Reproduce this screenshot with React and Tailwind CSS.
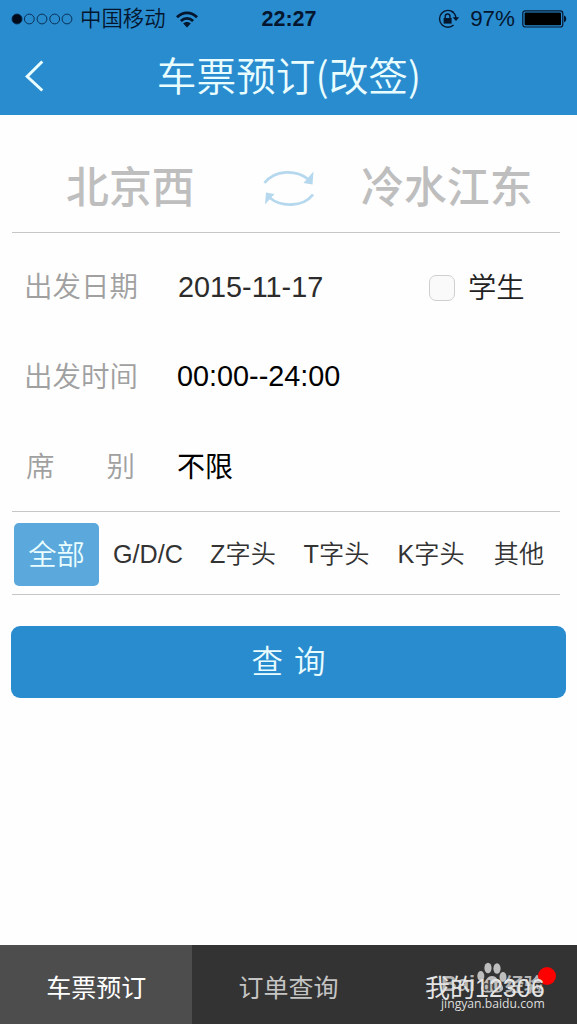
import React, { useState } from "react";

const trainTypes = [
  { label: "全部", width: "w-[85px]" },
  { label: "G/D/C", width: "w-[98px]" },
  { label: "Z字头", width: "w-[92px]" },
  { label: "T字头", width: "w-[95px]" },
  { label: "K字头", width: "w-[94px]" },
  { label: "其他", width: "w-[82px]" },
];

function StatusBar() {
  return (
    <div className="grid h-[38px] grid-cols-[1fr_auto_1fr] items-center pl-[11px] pr-[10px] text-[#04162e]">
      <div className="flex items-center">
        <svg width="62" height="12" viewBox="0 0 62 12" fill="none" stroke="#06284c" strokeWidth="0.9">
          <circle cx="6" cy="6" r="5" fill="#000a18" />
          <circle cx="18.3" cy="6" r="4.9" />
          <circle cx="31" cy="6" r="4.9" />
          <circle cx="43.7" cy="6" r="4.9" />
          <circle cx="56" cy="6" r="4.9" />
        </svg>
        <span className="ml-[7px] pt-[2px] text-[21.4px] font-[350] leading-none">中国移动</span>
        <svg className="ml-[10px]" width="22" height="17" viewBox="0 0 22 17" fill="none" stroke="#04162e" strokeWidth="2.8">
          <path d="M1 6.2C6.8.4 15.2.4 21 6.2" />
          <path d="M4.9 9.9c3.6-3.4 8.6-3.4 12.2 0" />
          <path d="M11 16.4l-3.8-3.8c2.2-2 5.4-2 7.6 0z" fill="#04162e" stroke="none" />
        </svg>
      </div>
      <span className="pt-[2px] text-[21.5px] font-bold leading-none">22:27</span>
      <div className="flex items-center justify-end">
        <svg width="22" height="20" viewBox="0 0 22 20" fill="none" stroke="#04162e" strokeWidth="1.4">
          <path d="M15.6 3.6A8.4 8.4 0 1 0 15.6 16" />
          <path d="M13.5 2.3A8.4 8.4 0 0 1 18 9" />
          <path d="M14.6 8.2h6.6L18 12z" fill="#04162e" stroke="none" />
          <path d="M5.6 9h8v5.6h-8z" fill="#04162e" stroke="none" />
          <path d="M7.2 9V7.4a2.4 2.4 0 0 1 4.8 0V9" />
        </svg>
        <span className="ml-[10px] text-[22.4px] leading-none">97%</span>
        <svg className="ml-[7px]" width="45" height="18" viewBox="0 0 45 18">
          <rect x="0.8" y="0.8" width="40" height="16.2" rx="2.5" fill="none" stroke="#04162e" strokeWidth="1.2" />
          <rect x="2.6" y="2.5" width="36.4" height="12.8" rx="1" fill="#000" />
          <path d="M42 5.6c3 .6 3 6 0 6.6z" fill="#04162e" />
        </svg>
      </div>
    </div>
  );
}

function Header() {
  return (
    <header className="h-[115px] bg-[#298ccf]">
      <StatusBar />
      <div className="grid h-[76px] grid-cols-[64px_1fr_64px] items-center">
        <button type="button" className="pl-[25px]">
          <svg width="20" height="32" viewBox="0 0 20 32" fill="none" stroke="#e9fdff" strokeWidth="3">
            <path d="M17.3 1.5L2.2 16.5l15.1 14" />
          </svg>
        </button>
        <h1 className="whitespace-nowrap pb-[5px] pl-px text-center font-['Noto_Sans_CJK_SC',sans-serif] text-[39.7px] font-[350] leading-none text-[#e9fdff]">
          车票预订(改签)
        </h1>
      </div>
    </header>
  );
}

function Stations() {
  return (
    <div className="flex h-[118px] items-center border-b border-[#c6c6c6] pt-[28px] text-[42.9px] font-medium leading-none text-[#bebebe]">
      <span className="w-[251px] pl-[54px] pt-[2px]">北京西</span>
      <svg width="52" height="38" viewBox="0 0 52 38" fill="none" stroke="#b5d8ee" strokeWidth="2.8">
        <path d="M1.5 14C12 .5 33 .5 45 10" />
        <path d="M50.5 2.5L49.5 15.5 40.5 14z" fill="#b5d8ee" stroke="none" />
        <path d="M50 25.5C40 38.5 18 38 7 29" />
        <path d="M2 35.5L3 23.5l8.5 1.5z" fill="#b5d8ee" stroke="none" />
      </svg>
      <span className="pl-[46px] pt-[2px]">冷水江东</span>
    </div>
  );
}

function Row({ label, children }) {
  return (
    <div className="flex h-[90px] items-center leading-none">
      <div className="w-[165px] pl-[12px] text-[28.5px] font-[350] text-[#a0a0a0]">{label}</div>
      {children}
    </div>
  );
}

function Watermark() {
  return (
    <div className="absolute left-[441px] top-[17px] w-[105px] text-[#b4b4b4]">
      <svg className="absolute left-[36px] top-0" width="30" height="32" viewBox="0 0 30 32" fill="#bdbdbd">
        <ellipse cx="3.8" cy="14" rx="3.5" ry="5" />
        <ellipse cx="11" cy="6" rx="3.6" ry="5.2" />
        <ellipse cx="20" cy="6.5" rx="3.6" ry="5.2" />
        <ellipse cx="26" cy="15" rx="3.5" ry="5" />
        <path d="M15 14c5 0 6 5 10 9 4 6-3 9-10 7-7 2-14-1-10-7 4-4 5-9 10-9z" />
      </svg>
      <div className="flex h-[33px] items-end whitespace-nowrap text-[22px] font-bold leading-none">
        <span className="w-[35px]">Bai</span>
        <span className="relative w-[29px] pb-[2px] pl-[6px] text-[15px] text-[#4a4a4a]">du</span>
        <span className="text-[19px]">经验</span>
      </div>
      <div className="mt-[3px] font-['Open_Sans',sans-serif] text-[12.2px] leading-none text-[#dedede]">jingyan.baidu.com</div>
    </div>
  );
}

function BottomNav() {
  return (
    <nav className="relative grid h-[79px] grid-cols-3 items-stretch bg-[#333] text-[25px] leading-none text-[#c4c4c4]">
      <button type="button" className="bg-[#4d4d4d] pt-[7px] text-white">车票预订</button>
      <button type="button" className="pt-[7px]">订单查询</button>
      <button type="button" className="z-10 pt-[7px] pl-[8px] text-[#e4e4e4]">我的12306</button>
      <Watermark />
      <span className="absolute left-[538px] top-[22px] size-[18px] rounded-full bg-[#fe0000]" />
    </nav>
  );
}

export default function App() {
  const [selected, setSelected] = useState("全部");
  const [student, setStudent] = useState(false);

  return (
    <div className="flex h-[1024px] w-[577px] flex-col overflow-hidden bg-[#fefefe] font-['Liberation_Sans','Noto_Sans_CJK_SC',sans-serif]">
      <Header />

      <main className="flex-1">
        <div className="ml-[12px] w-[548px]">
          <Stations />

          {/* Query conditions */}
          <div className="h-[279px] border-b border-[#c6c6c6] pt-[9px]">
            <Row label="出发日期">
              <span className="w-[252px] pl-px text-[28.8px] text-[#2c2c2c]">2015-11-17</span>
              <label className="flex items-center pt-[2px] text-[28.3px] font-[350] text-[#222]">
                <input
                  type="checkbox"
                  checked={student}
                  onChange={(e) => setStudent(e.target.checked)}
                  className="mr-[13px] size-[26px] appearance-none rounded-[7px] border border-[#cfcfcf] bg-[#fafafa] checked:bg-[#298ccf]"
                />
                学生
              </label>
            </Row>
            <Row label="出发时间">
              <span className="pb-[2px] text-[28.8px] text-black">00:00--24:00</span>
            </Row>
            <Row label={<span className="flex w-[113px] justify-between pl-[2px] pr-[2px]"><span>席</span><span>别</span></span>}>
              <span className="pt-[2px] text-[28px] text-black">不限</span>
            </Row>
          </div>

          {/* Train type */}
          <div className="flex h-[83px] items-center border-b border-[#c6c6c6] pl-[2px] pt-[3px]">
            {trainTypes.map(({ label, width }) => (
              <button
                key={label}
                type="button"
                onClick={() => setSelected(label)}
                className={`${width} h-[63px] shrink-0 whitespace-nowrap font-[350] leading-none ${
                  selected === label
                    ? "rounded-[5px] bg-[#5ba8dc] pt-[2px] text-[28.3px] text-[#e9fdff]"
                    : "text-[25.2px] text-[#333]"
                }`}
              >
                {label}
              </button>
            ))}
          </div>
        </div>

        <button
          type="button"
          className="ml-[11px] mt-[31px] flex h-[72px] w-[555px] items-center justify-center gap-[11px] rounded-[9px] bg-[#298ccf] pt-px text-[31.5px] font-[350] leading-none text-[#e9fdff]"
        >
          <span>查</span>
          <span>询</span>
        </button>
      </main>

      <BottomNav />
    </div>
  );
}
